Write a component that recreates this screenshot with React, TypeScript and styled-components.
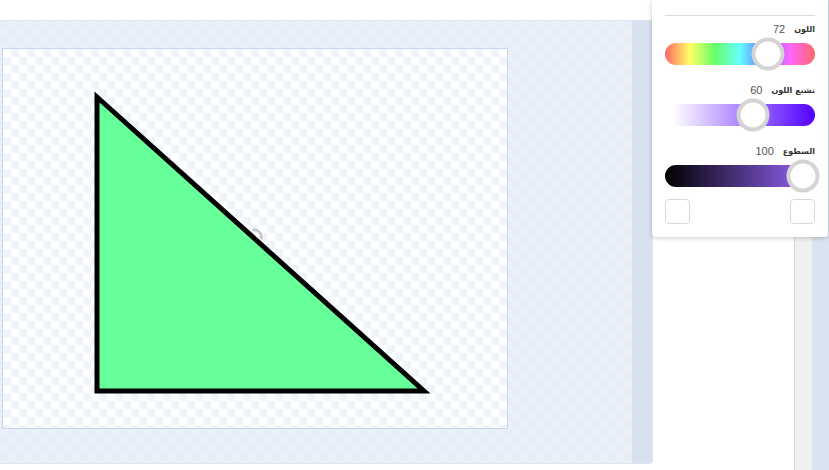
import styled, { createGlobalStyle } from 'styled-components';
import React from 'react';

const GlobalStyle = createGlobalStyle`
  html, body {
    margin: 0;
    padding: 0;
    background: #fff;
    font-family: "DejaVu Sans", "Liberation Sans", sans-serif;
  }
  * { box-sizing: border-box; }
`;

const HUE = 72;
const SAT = 60;
const BRIGHT = 100;

// thumb centre, measured from the track's left edge
const thumbLeft = (v: number) => 13 + v * 1.25;

type Slider = {
  label: string;
  value: number;
  kind: 'hue' | 'sat' | 'bright';
};

const sliders: Slider[] = [
  { label: 'اللون', value: HUE, kind: 'hue' },
  { label: 'تشبع اللون', value: SAT, kind: 'sat' },
  { label: 'السطوع', value: BRIGHT, kind: 'bright' },
];

function App() {
  return (
    <Page>
      <GlobalStyle />
      <MainColumn>
        <TopBar />
        <Workspace>
          <CanvasArea>
            <Canvas>
              <svg width="504" height="379" viewBox="0 0 504 379">
                <polygon
                  points="94,48 94,342 421,342"
                  fill="#66ff99"
                  stroke="#000"
                  strokeWidth="5"
                  strokeLinejoin="miter"
                  strokeMiterlimit="10"
                />
                <path d="M250 181 a7 7 0 0 1 8 9" fill="none" stroke="#c4c4c4" strokeWidth="2.5" />
              </svg>
            </Canvas>
          </CanvasArea>
          <WorkspaceStrip />
        </Workspace>
        <BottomBar />
      </MainColumn>
      <SidePanel />
      <Scrollbar />
      <EdgeStrip />

      <ColorPopup>
        <Divider />
        <Groups>
          {sliders.map((s) => (
            <Group key={s.kind}>
              <LabelRow>
                <Label>{s.label}</Label>
                <Value>{s.value}</Value>
              </LabelRow>
              <Track $kind={s.kind}>
                <Thumb style={{ left: thumbLeft(s.value) }} />
              </Track>
            </Group>
          ))}
        </Groups>
        <SwatchRow>
          <Swatch />
          <Swatch />
        </SwatchRow>
      </ColorPopup>
    </Page>
  );
}

export default App;

const Page = styled.div`
  position: relative;
  display: flex;
  width: 829px;
  height: 470px;
  overflow: hidden;
`;

const MainColumn = styled.div`
  width: 653px;
  display: flex;
  flex-direction: column;
`;

const TopBar = styled.div`
  height: 21px;
  background: #fff;
  border-bottom: 1px solid #dde6f2;
`;

const Workspace = styled.div`
  height: 443px;
  display: flex;
  border-right: 1px solid #e2e5ea;
  border-bottom: 1px solid #e2e5ea;
  border-bottom-right-radius: 4px;
  overflow: hidden;
`;

const CanvasArea = styled.div`
  width: 632px;
  padding: 27px 0 0 2px;
  background-color: #e8eef8;
  background-image: conic-gradient(#ecf1f9 25%, transparent 0 50%, #ecf1f9 0 75%, transparent 0);
  background-size: 16px 16px;
`;

const Canvas = styled.div`
  width: 506px;
  height: 381px;
  border: 1px solid #c6d6ef;
  background-color: #fff;
  background-image: conic-gradient(#f0f5fc 25%, transparent 0 50%, #f0f5fc 0 75%, transparent 0);
  background-size: 16px 16px;

  svg { display: block; }
`;

const WorkspaceStrip = styled.div`
  flex: 1;
  background: #d7e1ef;
`;

const BottomBar = styled.div`
  flex: 1;
  background: #fff;
`;

const SidePanel = styled.div`
  width: 142px;
  background: #fff;
  border-right: 1px solid #d2d2d2;
`;

const Scrollbar = styled.div`
  width: 17px;
  background: #f0f0f0;
`;

const EdgeStrip = styled.div`
  flex: 1;
  background: #dae3f0;
`;

const ColorPopup = styled.div`
  position: absolute;
  top: 0;
  left: 652px;
  width: 176px;
  height: 237px;
  padding: 15px 13px 0 13px;
  background: #fff;
  border-radius: 0 0 4px 4px;
  box-shadow: 0 1px 5px rgba(0, 0, 0, 0.22);
  display: flex;
  flex-direction: column;
`;

const Divider = styled.div`
  height: 1px;
  background: #dcdcdc;
`;

const Groups = styled.div`
  margin-top: 7px;
  display: flex;
  flex-direction: column;
  gap: 19px;
`;

const Group = styled.div`
  display: flex;
  flex-direction: column;
  gap: 8px;
`;

const LabelRow = styled.div`
  direction: rtl;
  height: 12px;
  display: flex;
  align-items: center;
  gap: 9px;
`;

const Label = styled.span`
  font-size: 8px;
  font-weight: 700;
  color: #333;
`;

const Value = styled.span`
  font-family: "Liberation Sans", Arial, sans-serif;
  font-size: 11px;
  color: #555;
`;

const trackBg = {
  hue: 'linear-gradient(to right, #ff6666 0%, #ffff66 16.6%, #66ff66 33.3%, #66ffff 50%, #6666ff 66.6%, #ff66ff 83.3%, #ff6666 100%)',
  sat: 'linear-gradient(to right, #ffffff 5%, #5200ff 100%)',
  bright: 'linear-gradient(to right, #000000 0%, #9766ff 100%)',
};

const Track = styled.div<{ $kind: 'hue' | 'sat' | 'bright' }>`
  position: relative;
  height: 22px;
  border-radius: ${(p) => (p.$kind === 'sat' ? '0 11px 11px 0' : '11px')};
  background: ${(p) => trackBg[p.$kind]};
`;

const Thumb = styled.div`
  position: absolute;
  top: 50%;
  width: 33px;
  height: 33px;
  border-radius: 50%;
  background: #fff;
  border: 4px solid #d4d4d4;
  transform: translate(-50%, -50%);
`;

const SwatchRow = styled.div`
  margin-top: 12px;
  display: flex;
  justify-content: space-between;
`;

const Swatch = styled.div`
  width: 25px;
  height: 25px;
  border: 1px solid #d8d8d8;
  border-radius: 4px;
  background: #fff;
`;
